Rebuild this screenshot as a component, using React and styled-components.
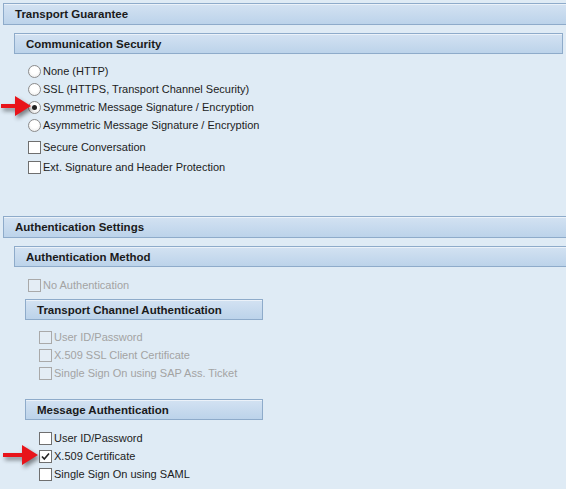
import React from "react";
import styled, { createGlobalStyle } from "styled-components";

const GlobalStyle = createGlobalStyle`
  body {
    margin: 0;
    background: #dfebf5;
    font-family: "Liberation Sans", Arial, sans-serif;
    font-size: 11px;
    color: #1c1c1c;
  }
`;

const Page = styled.div`
  position: relative;
  padding-top: 3px;
  height: 486px;
  overflow: hidden;
`;

const SectionHeader = styled.div`
  box-sizing: border-box;
  margin-left: 3px;
  height: 22px;
  display: flex;
  align-items: center;
  padding-left: 11px;
  border: 1px solid #8eabca;
  border-right: none;
  background: linear-gradient(#d3e2f2, #bcd3ea);
  box-shadow: inset 0 1px 0 rgba(255, 255, 255, 0.55);
  font-weight: bold;
  font-size: 11.5px;
  color: #1a1a1a;
`;

const SubHeader = styled.div`
  box-sizing: border-box;
  margin-left: ${(p) => p.$indent || 14}px;
  margin-top: ${(p) => p.$top || 8}px;
  width: ${(p) => (p.$width ? p.$width + "px" : "auto")};
  margin-right: ${(p) => (p.$open ? 0 : 3)}px;
  height: 21px;
  display: flex;
  align-items: center;
  padding-left: 11px;
  border: 1px solid #8eabca;
  border-right: ${(p) => (p.$open ? "none" : "1px solid #8eabca")};
  background: linear-gradient(#d3e2f2, #bcd3ea);
  box-shadow: inset 0 1px 0 rgba(255, 255, 255, 0.55);
  font-weight: bold;
  font-size: 11.5px;
  color: #1a1a1a;
`;

const OptionList = styled.div`
  display: flex;
  flex-direction: column;
  margin-left: ${(p) => p.$indent || 28}px;
  margin-top: ${(p) => p.$top || 8}px;
`;

const Option = styled.label`
  display: flex;
  align-items: center;
  gap: 2px;
  height: ${(p) => p.$h || 18}px;
  color: ${(p) => (p.$disabled ? "#a3a3a3" : "#1c1c1c")};
  white-space: nowrap;
`;

const Radio = styled.span`
  box-sizing: border-box;
  width: 13px;
  height: 13px;
  border-radius: 50%;
  border: 1px solid #8c8c8c;
  background: radial-gradient(circle at 50% 40%, #ffffff 40%, #e6e6e6);
  display: flex;
  align-items: center;
  justify-content: center;
  &::after {
    content: "";
    width: 5px;
    height: 5px;
    border-radius: 50%;
    background: ${(p) => (p.$checked ? "#222" : "transparent")};
  }
`;

const Box = styled.span`
  box-sizing: border-box;
  width: 13px;
  height: 13px;
  border: 1px solid ${(p) => (p.$disabled ? "#a9a9a9" : "#6f6f6f")};
  background: ${(p) => (p.$disabled ? "#e4edf5" : "#fff")};
  display: flex;
  align-items: center;
  justify-content: center;
`;

const Spacer = styled.div`
  height: ${(p) => p.$h}px;
`;

const ArrowWrap = styled.svg`
  position: absolute;
  left: ${(p) => p.$x}px;
  top: ${(p) => p.$y}px;
  filter: drop-shadow(2px 3px 2px rgba(0, 0, 0, 0.45));
`;

const Arrow = ({ x, y, w }) => (
  <ArrowWrap $x={x} $y={y} width={w + 6} height="26" viewBox={`0 0 ${w + 6} 26`}>
    <polygon
      points={`0,8 ${w - 16},8 ${w - 16},0 ${w},10 ${w - 16},20 ${w - 16},12 0,12`}
      fill="#e8141a"
    />
  </ArrowWrap>
);

const Check = () => (
  <svg width="11" height="11" viewBox="0 0 11 11">
    <path d="M2 5.5 L4.3 8 L9 2.5" fill="none" stroke="#222" strokeWidth="1.6" />
  </svg>
);

const RadioOpt = ({ checked, children }) => (
  <Option>
    <Radio $checked={checked} />
    {children}
  </Option>
);

const CheckOpt = ({ checked, disabled, h, children }) => (
  <Option $disabled={disabled} $h={h}>
    <Box $disabled={disabled}>{checked && <Check />}</Box>
    {children}
  </Option>
);

export default function App() {
  return (
    <Page>
      <GlobalStyle />
      <SectionHeader>Transport Guarantee</SectionHeader>
      <SubHeader>Communication Security</SubHeader>
      <OptionList>
        <RadioOpt>None (HTTP)</RadioOpt>
        <RadioOpt>SSL (HTTPS, Transport Channel Security)</RadioOpt>
        <RadioOpt checked>Symmetric Message Signature / Encryption</RadioOpt>
        <RadioOpt>Asymmetric Message Signature / Encryption</RadioOpt>
        <Spacer $h={3} />
        <CheckOpt h={20}>Secure Conversation</CheckOpt>
        <CheckOpt h={20}>Ext. Signature and Header Protection</CheckOpt>
      </OptionList>
      <Spacer $h={39} />
      <SectionHeader>Authentication Settings</SectionHeader>
      <SubHeader $open>Authentication Method</SubHeader>
      <OptionList $top={9}>
        <CheckOpt disabled>No Authentication</CheckOpt>
      </OptionList>
      <SubHeader $indent={25} $width={238} $top={5}>
        Transport Channel Authentication
      </SubHeader>
      <OptionList $indent={39}>
        <CheckOpt disabled>User ID/Password</CheckOpt>
        <CheckOpt disabled>X.509 SSL Client Certificate</CheckOpt>
        <CheckOpt disabled>Single Sign On using SAP Ass. Ticket</CheckOpt>
      </OptionList>
      <SubHeader $indent={25} $width={238} $top={17}>
        Message Authentication
      </SubHeader>
      <OptionList $indent={39} $top={9}>
        <CheckOpt>User ID/Password</CheckOpt>
        <CheckOpt checked>X.509 Certificate</CheckOpt>
        <CheckOpt>Single Sign On using SAML</CheckOpt>
      </OptionList>
      <Arrow x={1} y={96} w={30} />
      <Arrow x={3} y={445} w={35} />
    </Page>
  );
}
